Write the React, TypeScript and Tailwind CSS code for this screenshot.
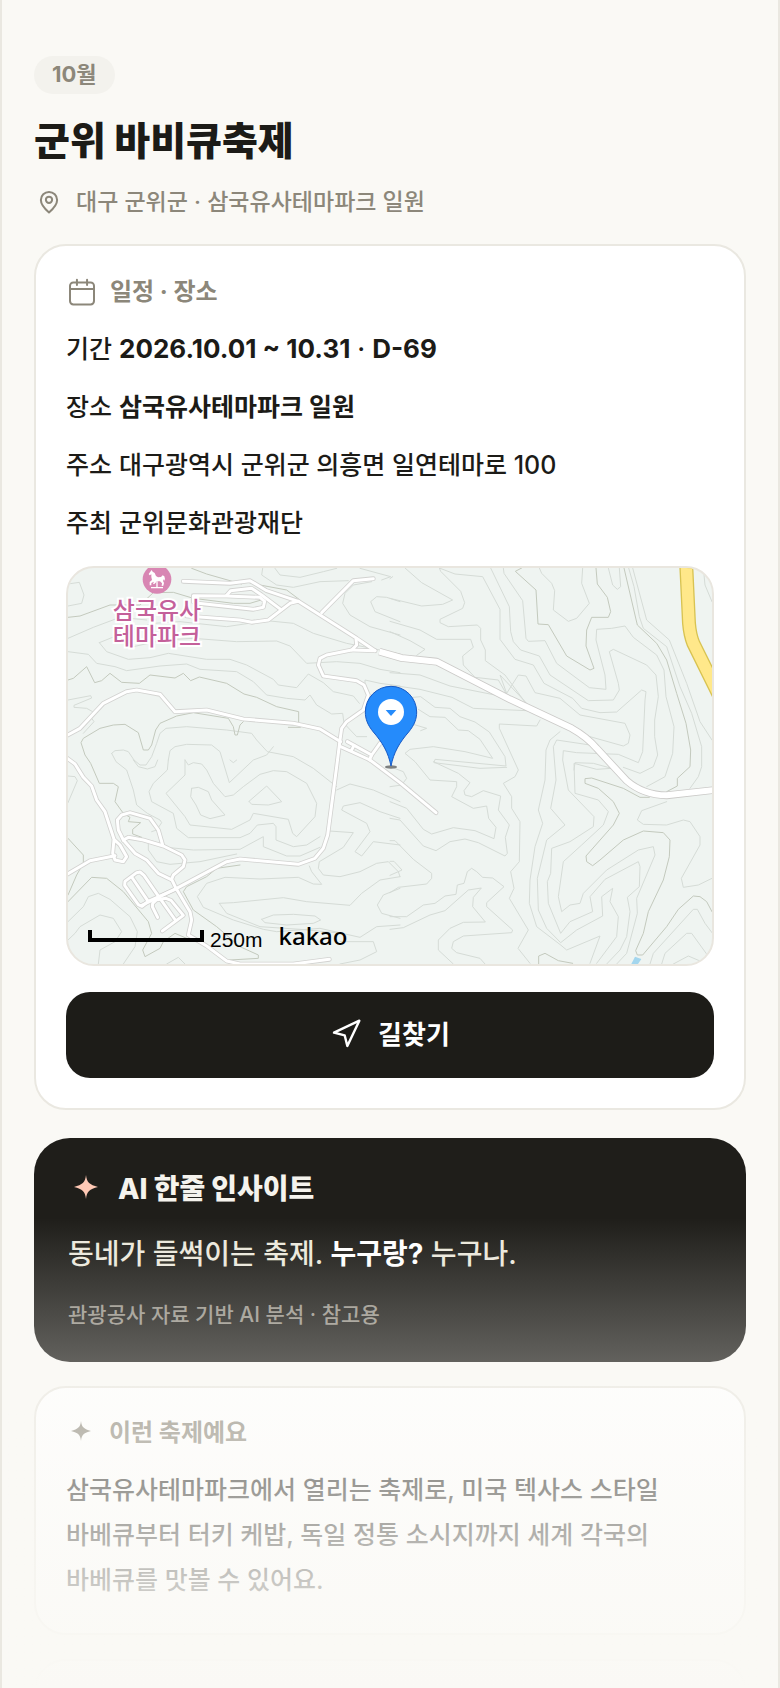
import type { ReactNode } from 'react';
import { Navigation } from 'lucide-react';

interface Tile {
  transform: string;
  contours: string[];
  ridges: string[];
  roads: string[];
}

// Map geometry, one entry per quadrant
const TILES: Tile[] = [
  {
    transform: 'translate(-24 -24)',
    contours: [
      '24 72 58 67 72 105 65 130 24 138',
      '24 235 100 202 180 172 260 180',
      '118 248 200 215 280 190 360 185 500 200 620 182 700 190 760 220 860 250 1020 282',
      '118 248 140 275 205 298 270 293 325 280 440 298 510 298 560 315 640 358 655 375 710 383 745 342 790 368 820 395 880 408 898 430',
      '220 260 310 240 400 235 530 245 650 243 690 258 740 310 830 305 900 310 960 328 1020 338',
      '24 275 85 283 110 310 165 320 200 332 300 318 380 312 420 328 530 335 580 365 620 405 680 415 735 420 750 405 770 435 815 462 848 460 852 490 890 530 920 530',
      '915 375 915 360 960 370 1020 378',
      '24 420 92 407 95 414 42 436 42 442 80 445 98 455 95 475 102 485 70 520',
      '155 580 165 572 190 570 205 575 222 600 240 615 258 615 275 590 290 550 300 520 318 505 380 500 500 510 575 520 590 540 622 575 700 590 760 625 830 680',
      '155 580 168 605 200 630 220 690 230 735 262 760 300 780 305 788 290 810 275 815',
      '220 600 235 620 262 627 285 620 293 600',
      '325 600 330 572 345 560 380 553 455 555 480 575 508 668 580 600 620 585 640 560',
      '325 600 322 630 280 670 267 695 275 725 340 760 350 805 385 833 540 833 570 820 592 795 640 790 648 800 648 840 700 860 740 855 780 830',
      '375 600 385 615 400 608 425 612 440 630 460 670 495 710 520 705 550 680 600 643 640 632 680 635 740 670 770 730 765 770 710 830 698 820 685 778 580 760 570 780 515 808 390 795 375 770 318 700 375 645 375 600',
      '395 685 415 682 445 695 455 720 495 765 450 776 422 765 408 735 392 710 395 685',
      '567 724 620 678 665 725 625 735 575 733 567 724',
      '265 850 265 870 290 905 330 913 420 905 530 882',
      '300 860 400 870 540 868 610 830 610 860 680 888 720 888 780 862',
      '608 25 605 45 650 75 700 82 780 65 865 62',
      '645 25 660 45 720 52 790 35 830 25',
      '900 25 992 50 965 60',
      '935 65 880 75 855 100 848 130 870 165 930 200 1020 225',
      '1020 125 980 112 950 110 932 125 945 155 1020 185',
    ],
    ridges: [
      '24 172 60 168 150 135 240 135 280 98 340 97 400 115 520 130 570 130 620 115',
      '395 25 440 42 545 72 555 65 600 75 680 90 720 120',
      '24 360 40 355 80 320 104 368 125 362 150 340 185 367 238 370 270 345 345 354 370 340 392 362 418 351 500 370 552 402 590 412 650 440 716 455 716 490 722 502 685 502',
      '550 485 540 495 532 525 525 525 520 500 505 475 400 458 350 468 300 490 287 510 275 555 265 570 250 570 235 518 195 493 160 495 120 505 70 535 63 548 75 585 92 610 118 670 160 670 175 680 165 725 190 760 210 772 205 785 242 788 218 808 218 822 245 832',
    ],
    roads: [
      '370 64 510 70 570 62 620 92 715 124 890 235 945 272',
      '785 158 880 62 940 56',
      '400 125 400 107 500 108 600 112 614 124 610 142 580 148 415 130',
      '500 106 512 92 575 85 605 105 662 148',
      '380 168 430 172 540 180 575 187 625 180 690 130 715 124',
      '888 238 890 255 875 270 945 272',
      '875 270 800 285 780 295 775 315 790 348 890 362 912 375 925 405 910 450 860 485 845 505 840 540 830 620 803 825 790 865 765 895 715 913 540 897 500 905 350 985 245 1036',
      '18 528 60 505 130 430 200 395 230 390 300 403 345 455 440 450 550 477 700 490 780 507 842 545',
      '842 560 930 600 1020 668 1128 758',
      '862 545 935 585 960 550 990 535',
      '874 572 882 556',
      '928 600 935 585',
    ],
  },
  {
    transform: 'translate(966 -24)',
    contours: [
      '0 56 8 50',
      '45 24 95 68 188 120 158 133 95 138 0 115',
      '148 24 152 34 212 94 224 128 218 145 150 178 150 188 175 200 262 195 272 205 272 240 286 270 286 302 345 345 408 430',
      '0 184 90 210 140 238 242 238 250 262 218 288 220 315 255 352 325 360 348 400',
      '148 24 195 42 278 50 330 148 330 238 375 298 430 315 462 370 548 415 575 445 630 458 680 456 755 390 768 395 765 420 758 575 745 608 685 583 560 578 520 572 518 600 535 690 612 770 610 800 540 845 485 865 482 940 472 965 475 1030 512 1120 540 1085 608 1055 600 1010 645 958 745 905 750 920 748 980 712 1012 720 1055 710 1130 690 1170 650 1212',
      '0 215 60 242 105 268 80 286',
      '302 24 358 140 362 215 370 245 392 270 448 288 480 345 595 422 670 420 688 390 685 370 658 275 670 268 770 315 798 345 805 410 794 480 794 530 803 585 790 620 750 640 700 622',
      '340 24 342 40 398 122 408 235 415 244 465 242 500 310 540 340 598 383 648 388 645 345 618 240 620 208 665 205 705 198 730 232 800 285 822 330 828 410 852 500 848 580 825 650 770 680',
      '448 24 455 40 485 70 494 92 490 150 535 184 560 175 598 130 575 70 578 24',
      '655 24 668 75 682 88 692 80 688 24',
      '716 24 732 80 748 170 760 205 830 260 870 380 905 460 935 560 935 620 925 650 900 685',
      '728 24 770 180 838 240 890 370 930 485 966 540',
      '940 24 945 75 966 125',
      '0 338 90 345 180 378 340 410',
      '0 375 90 388 186 412 250 445 410 452',
      '70 412 92 410 135 442 180 445 210 470 255 486 298 516 345 590 348 618 135 598 132 608 270 625 350 622',
      '85 448 120 470 165 472 205 510 235 512 270 538 308 595 225 575 130 560 60 568 45 580 75 605 120 660 200 665 200 680 185 710 250 745 290 738 296 775 318 802 312 836 255 812 190 803 125 822 100 808 50 745 0 725',
      '60 490 110 505 92 512',
      '410 430 330 345 350 400 385 345 408 348 435 398 510 415 570 465 705 490 720 525 715 550 700 558 600 530',
      '450 480 440 498 328 492 328 505 385 630 375 650 340 670 365 710 365 745 390 785 388 905 362 935 372 985 358 1015 415 1110 384 1165 420 1210',
      '510 515 480 540 468 570 465 660 445 750 458 790 435 860 420 960 418 1030 440 1100 512 1155 530 1170 630 1128 600 1210',
      '600 555 500 540 490 560 498 660 482 745 525 795 470 840 442 955 445 1050 470 1105 512 1148 560 1110 638 1068 635 1010 668 985 660 1025 685 1070 680 1130 620 1210',
      '552 630 555 608 610 610 665 625 620 628 552 610 555 700 625 720 655 755 640 795 575 855 520 905 505 1010 515 1055 540 1035 570 1030 580 1000 650 930 745 870 790 860 795 885 740 1015 742 1060 710 1180 680 1212',
    ],
    ridges: [
      '395 24 376 34 438 90 444 192 475 194 530 288 600 330 612 325 588 258 590 210 605 172 655 172 662 155 652 112 622 72 618 24',
      '702 24 742 195 800 250 830 300 860 400 888 490 902 570 900 620 862 655 862 678 830 695',
    ],
    roads: [],
  },
  {
    transform: 'translate(-24 576)',
    contours: [
      '24 48 45 50 52 62 24 128',
      '808 213 880 218 850 262 778 305 775 325 790 345 840 350 900 335 950 310 985 305 1015 335 1020 350',
      '830 90 870 72 940 90 1020 125',
      '1020 175 960 155 900 128 850 138 845 150 920 190 930 215 885 275 905 288 940 245 1020 255',
      '748 318 755 335 785 373 760 372 715 352 600 357 495 352 440 370 412 410 430 442 520 480 610 508 650 515 780 505 900 532 950 500 1020 495',
      '478 430 520 428 670 413 740 425 870 436 905 400 960 360 1020 350',
      '478 430 500 460 600 500 720 508 850 520',
      '605 478 640 465 700 463 765 468 782 480 760 490 680 495 615 488 605 478',
      '1020 385 970 405 952 435 965 460 1020 475',
      '24 485 70 440 85 410 115 400 150 418 210 470 232 515 225 560 190 612',
      '24 540 45 520 60 500 120 465 160 475 185 515 165 545 120 570 115 612',
      '840 545 940 545 950 575 900 600 840 612',
      '320 612 355 592 375 612',
      '510 0 520 8 530 0',
    ],
    ridges: [
      '24 235 70 285 70 310 50 345 24 405',
      '24 425 95 352 140 355 190 395 265 485 275 520 248 570 255 590 300 565 310 545 345 520 380 535',
      '540 315 470 325 440 350 380 380 370 395 400 450 470 500 540 560 595 585 595 595 510 600',
    ],
    roads: [
      '18 -8 45 12 70 52 95 78 110 120 135 155 162 238 158 280 165 300 190 305 200 290 180 255 162 238',
      '18 345 90 302 165 287',
      '190 240 175 210 172 180 185 165 210 158 270 175 295 210 308 255',
      '190 240 205 232 250 240 310 258 365 285 375 300 370 320 340 345 335 358 348 385 390 455 395 480 385 525 440 558 500 603 540 612 700 612 808 598',
      '190 240 225 280 260 300 295 340 332 358',
      '302 418 252 346 240 336 230 338 195 364 194 376 235 434 246 439 263 425 348 387',
      '217 354 263 422',
      '293 472 277 440 278 430 290 419 318 415 333 421 370 466 307 513',
      '302 418 346 480',
    ],
  },
  {
    transform: 'translate(966 576)',
    contours: [
      '0 175 30 180 100 258 138 272 180 245 225 237 265 248 345 288 352 280 346 232 358 195 325 150 332 108 280 92 245 110 225 105 222 92 240 68 205 40 130 5',
      '0 242 15 242 70 298 125 340 125 355 110 372 25 382 0 398',
      '0 304 12 304 36 330 0 346',
      '0 470 50 470 100 435 135 430 165 408 198 403 202 375 222 370 232 335 245 325 260 335 278 352 308 354 342 380 290 428 290 440 368 510 365 518 220 528 190 545 185 565 200 578 270 595 285 612',
      '0 508 40 503 120 465 165 452 235 390 274 384 250 412 248 440 286 486 220 487 180 505 145 540 145 570 190 612',
      '830 125 755 152 742 180 760 193 830 195 880 180 900 185 930 230 930 255 874 355 880 382 925 375 966 355',
      '780 612 790 580 910 448 922 448 945 490 966 518',
      '815 612 825 580 890 520 905 520 952 585',
      '850 612 895 588 935 605',
      '0 20 40 35 50 55 35 75 0 80',
    ],
    ridges: [
      '778 112 750 112 700 85 605 54 585 56 585 70 625 85 670 125 688 160 670 195 588 288 590 305 608 317 630 300 700 240 760 213 820 218 840 240 838 290 820 360 775 455 760 520 737 572 742 585 758 585 830 500 865 448 910 408 930 410 950 425 966 455',
      '446 612 446 588 465 580 505 602 548 610',
    ],
    roads: [],
  },
];

const INFO = [
  { label: '기간', value: <><b>2026.10.01 ~ 10.31</b> · <b>D-69</b></>, size: 'text-[26px]' },
  { label: '장소', value: <b>삼국유사테마파크 일원</b>, size: 'text-[25px]' },
  { label: '주소', value: '대구광역시 군위군 의흥면 일연테마로 100', size: 'text-[25px]' },
  { label: '주최', value: '군위문화관광재단', size: 'text-[25px]' },
];

function PinIcon() {
  return (
    <svg viewBox="0 0 24 24" className="size-[30px] shrink-0" fill="none" stroke="currentColor" strokeWidth="1.6" strokeLinejoin="round" aria-hidden="true">
      <path d="M12 20.4c-3-2.6-6.5-6.2-6.5-10a6.5 6.5 0 0 1 13 0c0 3.8-3.5 7.4-6.5 10z" />
      <circle cx="12" cy="10.2" r="2.5" />
    </svg>
  );
}

function CalendarIcon() {
  return (
    <svg viewBox="0 0 24 24" className="size-8 shrink-0" fill="none" stroke="currentColor" strokeWidth="1.5" strokeLinecap="round" aria-hidden="true">
      <rect x="3" y="4.8" width="18" height="16.5" rx="2.5" />
      <path d="M3 9.7h18M8.2 2.8v4M15.8 2.8v4" />
    </svg>
  );
}

function Sparkle({ className }: { className: string }) {
  return (
    <svg viewBox="0 0 24 24" className={className} fill="currentColor" aria-hidden="true">
      <path d="M12 0c.8 7.500 3.500 9.600 12 12-8.500 2-11.200 4.500-12 12-.8-7.500-3.500-10-12-12 8.500-2.400 11.200-4.500 12-12z" />
    </svg>
  );
}

function Lines({ paths, stroke, width }: { paths: string[]; stroke: string; width: number }) {
  return (
    <g fill="none" stroke={stroke} strokeWidth={width} strokeLinecap="round" strokeLinejoin="round">
      {paths.map((points) => (
        <polyline key={points} points={points} />
      ))}
    </g>
  );
}

function FestivalMap() {
  const highway = 'M888 0 L897 190 Q900 225 910 250 L990 412';
  const mainRoad = 'M-32 275 L35 294 L140 305 L360 418 L545 505 Q590 530 620 565 L710 662 Q760 705 830 706 L990 688';

  return (
    <div className="relative h-[400px] overflow-hidden rounded-[28px] border-2 border-[#e9e6df] bg-[#eff4f1]">
      <svg viewBox="0 0 1932 1188" preserveAspectRatio="xMidYMid slice" className="block size-full" role="img" aria-label="삼국유사테마파크 지도">
        {TILES.map((tile) => (
          <g key={tile.transform} transform={tile.transform}>
            <Lines paths={tile.contours} stroke="#d5dbd6" width={3} />
            <Lines paths={tile.ridges} stroke="#c3c9bd" width={3} />
          </g>
        ))}
        <path d="M1701 1166 L1720 1173 L1710 1188 L1690 1188Z" fill="#a3d6ee" />

        {/* Roads: every casing first so the junctions stay open */}
        {TILES.map((tile) => (
          <g key={tile.transform} transform={tile.transform}>
            <Lines paths={tile.roads} stroke="#d2d2d0" width={14} />
          </g>
        ))}
        <path d={mainRoad} transform="translate(966 -24)" fill="none" stroke="#cbcac8" strokeWidth="23" strokeLinejoin="round" />
        {TILES.map((tile) => (
          <g key={tile.transform} transform={tile.transform}>
            <Lines paths={tile.roads} stroke="#ffffff" width={9} />
          </g>
        ))}
        <g transform="translate(966 -24)" fill="none" strokeLinejoin="round">
          <path d={mainRoad} stroke="#ffffff" strokeWidth="18" />
          <path d={highway} stroke="#d8c352" strokeWidth="42" />
          <path d={highway} stroke="#ffe88a" strokeWidth="34" />
        </g>

        {/* Theme park: carousel horse */}
        <circle cx="267" cy="34" r="43" fill="#d886b3" />
        <path
          d="M251 6l3 5 6 4 4 9 6 4 9-1 5-5 5 3 2 8-3 6-2-6-1 6 3 6-2 8-5 1 1-8-6-6-10 0-3 4-5 5-3-2 3-6-8 4 0 7-5 0 0-10 7-6-2-9 0-8-5 3-3-4 5-7z"
          fill="#ffffff"
        />
        <path d="M265 40h4v17h-4zM249 57h36v4h-36z" fill="#ffffff" />

        {/* Marker */}
        <g transform="translate(-24 -24)">
          <ellipse cx="993" cy="621" rx="18" ry="5" fill="#7d8080" />
          <path
            d="M993 618C985 578 968 548 940 516 922 494 916 476 916 456a77 77 0 0 1 154 0c0 20-6 38-24 60-28 32-45 62-53 102z"
            fill="#258bfb"
            stroke="#1659c4"
            strokeWidth="3"
          />
          <circle cx="993" cy="456" r="39" fill="#ffffff" />
          <path d="M977 450h32l-16 18z" fill="#258bfb" />
        </g>
      </svg>

      <p className="absolute top-7 left-[41px] w-24 text-center font-['Noto_Sans_CJK_KR',sans-serif] text-2xl leading-[26px] font-medium break-keep text-[#c4609a] [paint-order:stroke] [-webkit-text-stroke:4px_#fff]">
        삼국유사 테마파크
      </p>

      {/* Scale and provider */}
      <div className="absolute bottom-3 left-5 flex items-end text-black">
        <span className="mb-2.5 h-3 w-[116px] border-x-4 border-b-4 border-black" />
        <span className="ml-1.5 font-['Liberation_Sans',sans-serif] text-[21px] leading-6">250m</span>
        <span className="mb-0.5 ml-4 font-['Noto_Sans',sans-serif] text-2xl leading-7 font-medium">kakao</span>
      </div>
    </div>
  );
}

function Card({ children }: { children: ReactNode }) {
  return <section className="rounded-[32px] border-2 border-[#eae8e1] bg-white p-[30px]">{children}</section>;
}

export default function App() {
  return (
    <div className="relative h-screen overflow-hidden border-x-2 border-[#eae8e1] bg-[#faf9f5] px-8 pt-14 font-['Inter','Noto_Sans_CJK_KR',sans-serif] font-medium text-[#1c1b17]">
      <header>
        <span className="inline-flex h-[38px] items-center rounded-full bg-[#f3f2ed] px-[18px] pb-0.5 align-top text-[22px] font-bold text-[#8c877a]">
          10월
        </span>
        <h1 className="mt-[23px] text-[39px] leading-[48px] font-extrabold">군위 바비큐축제</h1>
        <p className="mt-[22px] flex items-center gap-3 text-[23px] leading-[30px] text-[#8c877a]">
          <PinIcon />
          대구 군위군 · 삼국유사테마파크 일원
        </p>
      </header>

      <main className="mt-[27px]">
        <Card>
          <h2 className="flex items-center gap-3 text-2xl leading-8 font-bold text-[#8c877a]">
            <CalendarIcon />
            일정 · 장소
          </h2>
          <dl className="mt-[18px] mb-5 flex flex-col gap-3 text-[25px] leading-[46px]">
            {INFO.map((row) => (
              <div key={row.label} className="flex gap-[7px]">
                <dt>{row.label}</dt>
                <dd className={row.size}>{row.value}</dd>
              </div>
            ))}
          </dl>
          <FestivalMap />
          <button type="button" className="mt-[26px] flex h-[86px] w-full items-center justify-center gap-4 rounded-[24px] bg-[#1d1c18] pb-0.5 text-[26px] font-bold text-white">
            <Navigation className="size-8" strokeWidth={1.8} />
            길찾기
          </button>
        </Card>

        {/* AI insight */}
        <section className="mt-7 rounded-[36px] bg-[#1f1e1a] px-[34px] pt-[34px] pb-8">
          <h2 className="flex items-center gap-5 pl-[6px] text-[28px] leading-[34px] font-extrabold text-[#f5f3ed]">
            <Sparkle className="mb-1 size-6 text-[#ffc9b5]" />
            AI 한줄 인사이트
          </h2>
          <p className="mt-6 text-[28px] leading-[48px] text-[#ebe8dc]">
            동네가 들썩이는 축제. <b className="text-white">누구랑?</b> 누구나.
          </p>
          <p className="mt-[22px] text-[21px] leading-[30px] text-[#98948a]">관광공사 자료 기반 AI 분석 · 참고용</p>
        </section>

        <div className="mt-6 flex flex-col gap-6">
          <Card>
            <h2 className="flex items-center gap-[18px] pl-[5px] text-2xl leading-[30px] font-bold text-[#8c877a]">
              <Sparkle className="mb-1 size-5" />
              이런 축제예요
            </h2>
            <p className="mt-5 text-[25px] leading-[45px] break-keep">
              삼국유사테마파크에서 열리는 축제로, 미국 텍사스 스타일 바베큐부터 터키 케밥, 독일 정통 소시지까지 세계 각국의 바베큐를 맛볼 수 있어요.
            </p>
          </Card>
          <Card>{null}</Card>
        </div>
      </main>

      {/* Bottom fade */}
      <div className="pointer-events-none absolute inset-x-0 bottom-0 h-[470px] bg-linear-to-b from-[#faf9f5]/0 to-[#faf9f5]" />
    </div>
  );
}
